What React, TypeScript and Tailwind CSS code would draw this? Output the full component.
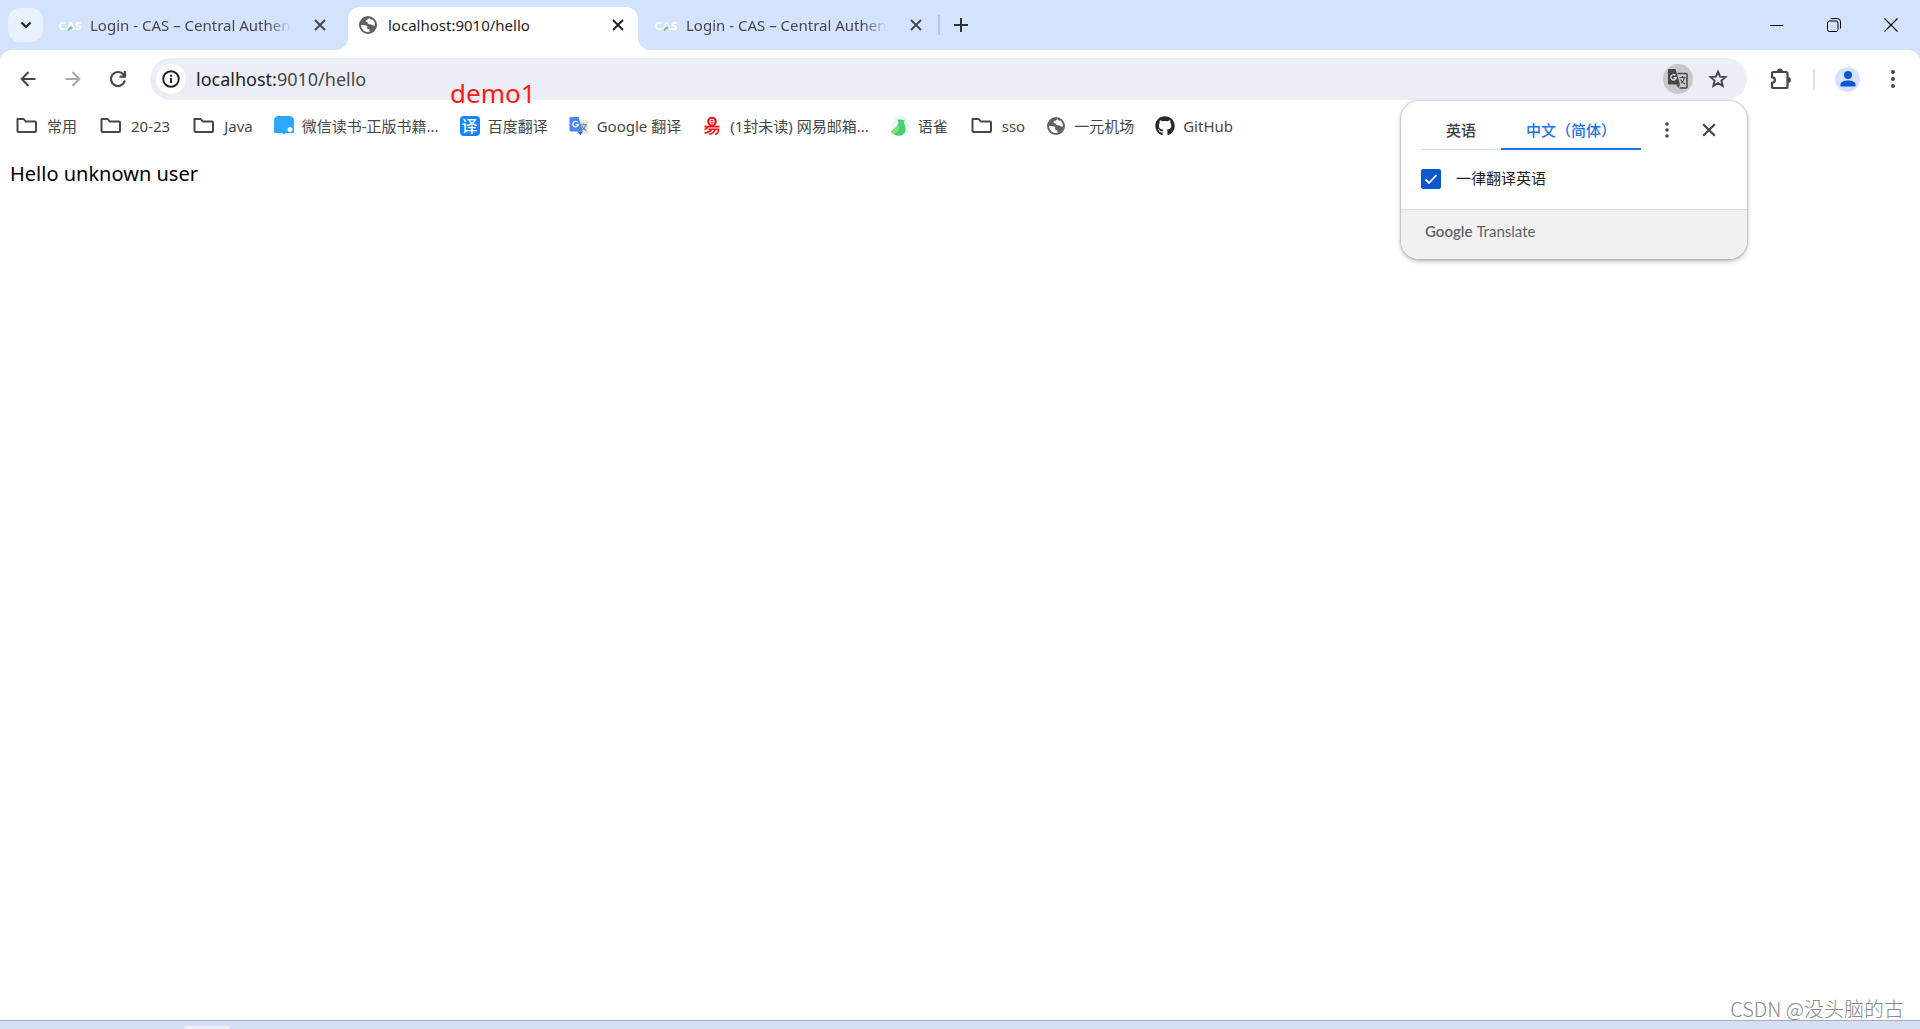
import { useState } from "react";
import type { ReactNode } from "react";
import { FaGithub } from "react-icons/fa";

const FONT = "font-['Noto_Sans','Noto_Sans_CJK_SC',sans-serif]";
const ICON_BTN = "flex h-9 w-9 shrink-0 items-center justify-center rounded-full";

function CasIcon() {
  return (
    <svg viewBox="0 0 20 20" className="h-5 w-5 shrink-0 overflow-visible">
      <text x="10" y="15" textAnchor="middle" fontSize="12" fontWeight="900" fill="#fff" className="font-['Lato',sans-serif]">
        CAS
      </text>
      <path d="M8 15.500c1-2 2.500-3 4.500-3.200" stroke="#5fc46a" strokeWidth="1.800" fill="none" />
    </svg>
  );
}

function GlobeIcon() {
  return (
    <svg viewBox="0 0 20 20" className="h-5 w-5 shrink-0">
      <circle cx="10" cy="10" r="9" fill="#5f6368" />
      <path
        d="M11.500 3.300c-1.200 0-1.300 1.300-2.300 1.500-1 .3-1.700.7-1.500 1.600.2.900 1.600.7 2.100 1.500.5.900 1.300 1.500 2.600 1.400 1.500-.1 1.700 1.300 3.100 1.300h1.500c-.2 3-2.400 5.700-5.400 6.300-.4-.9.300-1.600-.3-2.300-.7-.8-2-.4-2.300-1.500-.2-.8.600-1.500 0-2.200-.9-1-3.400-.6-5.900-1 .100 4.100 3.100 7.100 7 7.100 3.900 0 7-3.100 7-7 0-2.400-1.300-4.600-3.200-5.800-.2.900-1.600.4-2.400-.9z"
        fill="#fff"
      />
      <path d="M12 10.300c1.500-.4 1.900.9 3.200 1l1.700-.2c-.4 2.700-2.300 4.900-4.700 5.600-.1-1.200.2-2-.6-2.800-.6-.6-1.700-.6-1.600-1.400.1-1 .7-1.900 2-2.200z" fill="#5f6368" />
    </svg>
  );
}

function FolderIcon() {
  return (
    <svg viewBox="0 0 25 20" className="h-5 w-[25px] shrink-0" fill="none" stroke="#474747" strokeWidth="2" strokeLinejoin="round">
      <path d="M3.500 3h6.200l2 2.500h9.300a1 1 0 0 1 1 1V15a1 1 0 0 1-1 1H4.500a1 1 0 0 1-1-1z" />
    </svg>
  );
}

function WeReadIcon() {
  return (
    <svg viewBox="0 0 20 20" className="h-5 w-5 shrink-0">
      <path d="M4.500 0h11A4.500 4.500 0 0 1 20 4.500V17h-8l-2 1.500L8 17H0V4.500A4.500 4.500 0 0 1 4.500 0z" fill="#2ea7ff" />
      <circle cx="16" cy="13.500" r="2.500" fill="#fff" />
    </svg>
  );
}

function BaiduIcon() {
  return (
    <span className="flex h-5 w-5 shrink-0 items-center justify-center rounded bg-[#1486fb] text-base leading-5 font-medium text-white">
      译
    </span>
  );
}

function GoogleTranslateIcon() {
  return (
    <svg viewBox="0 0 20 20" className="h-5 w-5 shrink-0">
      <path d="M9 4.500h9a1.200 1.200 0 0 1 1.200 1.200v11.600A1.200 1.200 0 0 1 18 18.500h-6z" fill="#e2e3e4" />
      <path d="M11.500 8.800h6.500M14.600 7.500v1.300M16.800 9c-.5 2.400-2 4-4 5M12.800 10c.8 2 2.200 3.300 4.400 4.400" stroke="#6f7d86" strokeWidth="1.100" fill="none" />
      <path d="M8.500 15.500h5.300L11.500 19z" fill="#3054c8" />
      <path d="M1.700 1h7.800l4.300 14.500H1.700A1.200 1.200 0 0 1 .5 14.300V2.200A1.200 1.200 0 0 1 1.700 1z" fill="#4a86f0" />
      <path d="M8.500 6.300a2.700 2.700 0 1 0 .7 2.300H6.600" stroke="#fff" strokeWidth="1.300" fill="none" />
    </svg>
  );
}

function NeteaseIcon() {
  return (
    <svg viewBox="0 0 20 20" className="h-5 w-5 shrink-0" fill="none" stroke="#f50a0a">
      <circle cx="10" cy="5.500" r="4.800" fill="#f50a0a" stroke="none" />
      <path d="M7.800 5.600h4.300c0-3.200-4.300-3.200-4.300 0 0 2.800 2.800 2.800 4.200 1.700" stroke="#fff" strokeWidth="1.100" />
      <path d="M2.500 10.600h15M6 11c-.6 1.300-1.600 2-3.500 2.600M6.500 13.200h10c0 3-.6 4.600-3.500 5.300M9.500 13.500c-1 1.800-3 3-7 3.500M13.300 13.500c-1 2.600-3 4-6.300 5" strokeWidth="1.600" />
    </svg>
  );
}

function YuqueIcon() {
  return (
    <svg viewBox="0 0 20 20" className="h-5 w-5 shrink-0">
      <circle cx="11" cy="9" r="9" fill="#e6f9ee" />
      <path d="M7 3.800c2.500-.5 5.200-.6 7.400.4.500.3.400 1-.1 1.200-1 .6-.4 1.800.4 3.300 2 4.200 1.200 10.800-5.900 11C5.200 19.700 2.500 18 1 15.500 4.500 12.500 9.500 9 8.300 5.500z" fill="#45cf74" />
      <path d="M1 15.500C4.500 12.500 7 11.500 8.500 9.500c2 4-1 7.500-5 8.500C2.500 17.500 1.600 16.500 1 15.500z" fill="#7be36f" />
    </svg>
  );
}

function CloseIcon({ size }: { size: "sm" | "md" }) {
  return (
    <svg viewBox="0 0 12 12" className={size === "sm" ? "h-3 w-3" : "h-3.5 w-3.5"} fill="none" stroke="currentColor" strokeWidth="1.900">
      <path d="M1 1l10 10M11 1L1 11" />
    </svg>
  );
}

function DotsIcon() {
  return (
    <svg viewBox="0 0 20 20" className="h-5 w-5" fill="#474747">
      <circle cx="10" cy="3" r="2" />
      <circle cx="10" cy="10" r="2" />
      <circle cx="10" cy="17" r="2" />
    </svg>
  );
}

function Tab({ icon, title, active }: { icon: ReactNode; title: string; active?: boolean }) {
  return (
    <div
      role="tab"
      aria-selected={!!active}
      className={`relative flex h-[43px] w-[290px] shrink-0 items-center rounded-t-xl pr-2.5 pb-[7px] pl-2.5 ${
        active ? "bg-white text-[#1f1f1f]" : "text-[#474747]"
      }`}
    >
      {active && (
        <>
          <span className="absolute bottom-0 -left-3 h-3 w-3 bg-[radial-gradient(circle_at_0_0,transparent_12px,white_12px)]" />
          <span className="absolute -right-3 bottom-0 h-3 w-3 bg-[radial-gradient(circle_at_100%_0,transparent_12px,white_12px)]" />
        </>
      )}
      {icon}
      <span
        className={`ml-2.5 text-[15px] leading-6 whitespace-nowrap ${
          active ? "" : "[mask-image:linear-gradient(to_right,black_88%,transparent)]"
        }`}
      >
        {title}
      </span>
      <button aria-label="关闭标签页" className="ml-auto flex h-5 w-5 items-center justify-center">
        <CloseIcon size="sm" />
      </button>
    </div>
  );
}

const BOOKMARKS: Array<{ title: string; icon: ReactNode }> = [
  { title: "常用", icon: <FolderIcon /> },
  { title: "20-23", icon: <FolderIcon /> },
  { title: "Java", icon: <FolderIcon /> },
  { title: "微信读书-正版书籍...", icon: <WeReadIcon /> },
  { title: "百度翻译", icon: <BaiduIcon /> },
  { title: "Google 翻译", icon: <GoogleTranslateIcon /> },
  { title: "(1封未读) 网易邮箱...", icon: <NeteaseIcon /> },
  { title: "语雀", icon: <YuqueIcon /> },
  { title: "sso", icon: <FolderIcon /> },
  { title: "一元机场", icon: <GlobeIcon /> },
  { title: "GitHub", icon: <FaGithub className="h-5 w-5 shrink-0 text-[#24292f]" /> },
];

function TabStrip() {
  return (
    <div className="flex h-[50px] items-end bg-[#d3e2fd] pl-2">
      <button aria-label="搜索标签页" className="mr-[7px] mb-2 flex h-[34px] w-[35px] items-center justify-center rounded-xl bg-[#e9f0fe]">
        <svg viewBox="0 0 12 8" className="h-2 w-3" fill="none" stroke="#1f1f1f" strokeWidth="2.200">
          <path d="M1.500 1.500L6 6l4.500-4.500" />
        </svg>
      </button>
      <div role="tablist" className="flex gap-2">
        <Tab icon={<CasIcon />} title="Login - CAS – Central Authen" />
        <Tab icon={<GlobeIcon />} title="localhost:9010/hello" active />
        <Tab icon={<CasIcon />} title="Login - CAS – Central Authen" />
      </div>
      <span className="mb-[15px] ml-0.5 h-5 w-0.5 bg-[#a8c7fa]" />
      <button aria-label="打开新的标签页" className="mb-2 ml-1 flex h-[34px] w-[34px] items-center justify-center">
        <svg viewBox="0 0 14 14" className="h-3.5 w-3.5" fill="none" stroke="#333" strokeWidth="2">
          <path d="M7 0v14M0 7h14" />
        </svg>
      </button>
      <div className="ml-auto flex self-start text-black">
        <button aria-label="最小化" className="flex h-[50px] w-[57px] items-center justify-center">
          <span className="h-px w-[13px] bg-black" />
        </button>
        <button aria-label="向下还原" className="flex h-[50px] w-[57px] items-center justify-center">
          <svg viewBox="0 0 14 14" className="h-3.5 w-3.5" fill="none" stroke="currentColor">
            <rect x=".5" y="3" width="10.500" height="10.500" rx="2" />
            <path d="M3.500.6h7a3 3 0 0 1 3 3v6.900" />
          </svg>
        </button>
        <button aria-label="关闭" className="flex h-[50px] w-[58px] items-center justify-center">
          <svg viewBox="0 0 14 14" className="h-3.5 w-3.5" fill="none" stroke="currentColor" strokeWidth="1.100">
            <path d="M.5.5l13 13M13.500.5l-13 13" />
          </svg>
        </button>
      </div>
    </div>
  );
}

function Toolbar() {
  return (
    <div className="flex items-center pt-2 pr-[9px] pl-[10px]">
      <div className="flex gap-[9px]">
        <button aria-label="返回" className={ICON_BTN}>
          <svg viewBox="0 0 16 16" className="h-4 w-4" fill="none" stroke="#474747" strokeWidth="2">
            <path d="M15.500 8H2M8.500 1L1.700 8l6.800 7" />
          </svg>
        </button>
        <button aria-label="前进" className={ICON_BTN}>
          <svg viewBox="0 0 16 16" className="h-4 w-4" fill="none" stroke="#a9a9a9" strokeWidth="2">
            <path d="M.5 8H14M7.500 1l6.800 7-6.800 7" />
          </svg>
        </button>
        <button aria-label="重新加载" className={ICON_BTN}>
          <svg viewBox="0 0 18 18" className="h-[18px] w-[18px]" fill="none" stroke="#474747" strokeWidth="2.200">
            <path d="M15.800 10.500A7 7 0 1 1 14.500 4.700L16 6.500M10.500 6.700H16V1" />
          </svg>
        </button>
      </div>
      <div className="ml-[14px] flex h-[42px] flex-1 items-center rounded-full bg-[#ebeef7] pr-4 pl-1.5">
        <button aria-label="查看网站信息" className="flex h-[30px] w-[30px] shrink-0 items-center justify-center rounded-full bg-white">
          <svg viewBox="0 0 18 18" className="h-[18px] w-[18px]" fill="none" stroke="#1f1f1f" strokeWidth="1.900">
            <circle cx="9" cy="9" r="7.800" />
            <path d="M9 8v5M9 4.800v2" />
          </svg>
        </button>
        <label className="relative ml-2.5 flex-1 text-lg leading-6">
          <input aria-label="地址和搜索栏" defaultValue="localhost:9010/hello" className="block w-full bg-transparent text-transparent outline-none" />
          <span className="pointer-events-none absolute inset-0 text-[#1f1f1f]">
            localhost:<span className="text-[#474747]">9010/hello</span>
          </span>
        </label>
        <button aria-label="翻译此页" className="flex h-[30px] w-[30px] items-center justify-center rounded-full bg-[#c7c8cb]">
          <svg viewBox="0 0 20 20" className="h-5 w-5">
            <path d="M9.500 4.500H18a1 1 0 0 1 1 1V18a1 1 0 0 1-1 1h-6.500" fill="none" stroke="#474747" strokeWidth="1.500" />
            <path d="M11.500 8.500h6M14.500 7v1.500M16.500 8.500c-.4 2.600-1.700 4.400-3.700 5.600M12.500 10.500c1 1.800 2.300 3.100 4.500 4.500" fill="none" stroke="#474747" strokeWidth="1.100" />
            <path d="M1 0h6.500l4.500 15.500H1a1 1 0 0 1-1-1V1a1 1 0 0 1 1-1z" fill="#474747" />
            <path d="M8 15.500h4L10.500 19z" fill="#474747" />
            <path d="M7.400 6.300a2.700 2.700 0 1 0 .8 2.400H5.600" stroke="#dcdcdc" strokeWidth="1.400" fill="none" />
          </svg>
        </button>
        <button aria-label="为此标签页添加书签" className="ml-3 flex h-[26px] w-[26px] items-center justify-center">
          <svg viewBox="0 0 20 20" className="h-5 w-5" fill="none" stroke="#474747" strokeWidth="1.900">
            <path d="M10 2.600l2.100 5 5.400.5-4.100 3.500 1.300 5.300-4.700-2.900-4.700 2.900 1.300-5.300-4.100-3.500 5.400-.5z" />
          </svg>
        </button>
      </div>
      <button aria-label="扩展程序" className={`ml-4 ${ICON_BTN}`}>
        <svg viewBox="0 0 22 22" className="h-[22px] w-[22px]">
          <path d="M2 5.500a1.500 1.500 0 0 1 1.500-1.500h12.500a1.500 1.500 0 0 1 1.500 1.500v13a1.500 1.500 0 0 1-1.500 1.500H3.500a1.500 1.500 0 0 1-1.500-1.500v-3.600c3.900-.7 3.900-5.100 0-5.800z" fill="none" stroke="#474747" strokeWidth="2.200" />
          <path d="M7 3.500a2.900 2.900 0 0 1 5.800 0zM18 9a2.900 2.900 0 0 1 0 5.800z" fill="#474747" />
        </svg>
      </button>
      <span className="ml-3.5 h-5 w-0.5 bg-[#d3e2fd]" />
      <button aria-label="个人资料" className="ml-5 flex h-[25px] w-[25px] items-center justify-center rounded-full bg-[#d3e2fd]">
        <svg viewBox="0 0 16 16" className="h-4 w-4" fill="#0b57d0">
          <circle cx="8" cy="4" r="4" />
          <path d="M.5 15.500v-2C.5 10.800 4.300 9.500 8 9.500s7.500 1.300 7.500 4v2z" />
        </svg>
      </button>
      <button aria-label="自定义及控制" className={`ml-[15px] ${ICON_BTN}`}>
        <DotsIcon />
      </button>
    </div>
  );
}

function TranslatePopup() {
  const [always, setAlways] = useState(true);

  return (
    <div
      role="dialog"
      aria-label="Google Translate"
      className="absolute top-[101px] right-[173px] w-[346px] overflow-hidden rounded-[18px] bg-white shadow-[0_0_1px_1px_rgba(0,0,0,0.12),0_2px_5px_rgba(0,0,0,0.3)]"
    >
      <div className="flex pl-5">
        <div role="tablist" className="flex pt-2 text-[15px] leading-[22px] font-medium">
          <button role="tab" aria-selected="false" className="h-[41px] w-20 border-b border-[#dadce0] pt-0.5 text-[#3c4043]">
            英语
          </button>
          <button role="tab" aria-selected="true" className="h-[41px] w-[140px] border-b-2 border-[#1a73e8] pt-0.5 whitespace-nowrap text-[#1a73e8]">
            中文（简体）
          </button>
        </div>
        <button aria-label="翻译选项" className="mt-[11px] ml-2 flex h-9 w-9 items-center justify-center">
          <svg viewBox="0 0 16 16" className="h-4 w-4" fill="#474747">
            <circle cx="8" cy="2" r="1.800" />
            <circle cx="8" cy="8" r="1.800" />
            <circle cx="8" cy="14" r="1.800" />
          </svg>
        </button>
        <button aria-label="关闭翻译" className="mt-[11px] ml-1.5 flex h-9 w-9 items-center justify-center text-[#474747]">
          <CloseIcon size="md" />
        </button>
      </div>
      <label className="flex h-[59px] items-center pb-0.5 pl-5 text-[15px] text-[#1f1f1f]">
        <span className="relative mr-[15px] h-5 w-5">
          <input
            type="checkbox"
            checked={always}
            onChange={(e) => setAlways(e.target.checked)}
            className="block h-5 w-5 appearance-none rounded-xs border border-[#0b57d0] checked:bg-[#0b57d0]"
          />
          {always && (
            <svg viewBox="0 0 20 20" className="pointer-events-none absolute inset-0 h-5 w-5" fill="none" stroke="#fff" strokeWidth="1.800">
              <path d="M4.500 10.500l3.500 3.500 7.500-8" />
            </svg>
          )}
        </span>
        一律翻译英语
      </label>
      <div className="flex h-[50px] items-center gap-1 border-t border-[#dadce0] bg-[#f1f1f1] pb-1.5 pl-6 font-['Lato',sans-serif] text-[15px] text-[#5f6368]">
        <span className="font-semibold">Google</span>
        <span>Translate</span>
      </div>
    </div>
  );
}

export default function App() {
  return (
    <div className={`relative flex min-h-screen flex-col overflow-hidden bg-[#d3e2fd] ${FONT}`}>
      <TabStrip />
      <div className="flex flex-1 flex-col rounded-t-xl bg-white">
        <Toolbar />
        <nav aria-label="书签" className="flex items-center gap-[21px] pt-3 pl-[14px] text-[15px] leading-7 text-[#474747]">
          {BOOKMARKS.map((b) => (
            <a key={b.title} href="#" className="flex items-center gap-2 whitespace-nowrap">
              {b.icon}
              <span>{b.title}</span>
            </a>
          ))}
        </nav>
        <main className="flex-1 px-2.5 pt-5 text-xl leading-7 text-black">Hello unknown user</main>
      </div>
      <footer className="h-[9px] border-t border-[#a3adbd] bg-[#d6dff4] pt-[5px]">
        <div className="ml-[184px] h-[3px] w-[46px] rounded-t-md bg-[#ebf0fb]" />
      </footer>

      <span className="absolute top-[73px] left-[450px] text-[26px] leading-10 text-[#ff1a10]">demo1</span>
      <TranslatePopup />
      <span className="absolute right-4 bottom-1.5 font-['Noto_Sans_CJK_SC',sans-serif] text-xl leading-7 font-light text-[#8a8a8a]">
        CSDN @没头脑的古
      </span>
    </div>
  );
}
